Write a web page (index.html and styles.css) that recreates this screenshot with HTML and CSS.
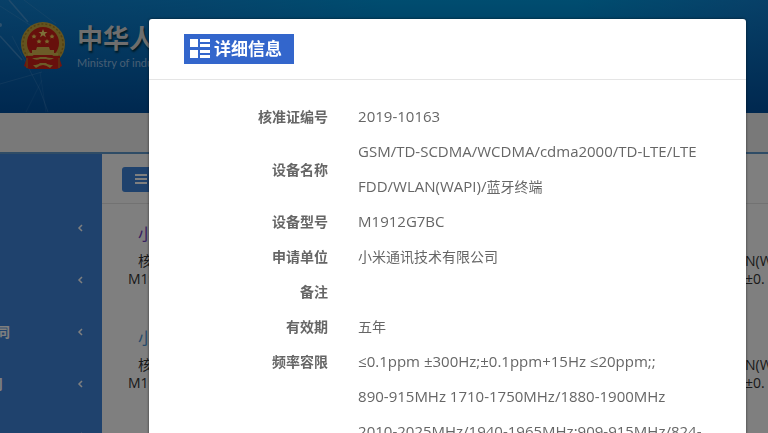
FILE: index.html
```html
<!DOCTYPE html>
<html lang="zh-CN">
<head>
<meta charset="utf-8">
<title>详细信息</title>
<link rel="stylesheet" href="styles.css">
</head>
<body>
<div class="page">
  <header class="banner">
    <svg class="rays" viewBox="0 0 150 113" aria-hidden="true">
      <g fill="none" stroke="#86b9e8">
        <path d="M0 36 22 60M9 0 28 22" stroke-width="1.5" opacity=".4"/>
        <path d="M12 36 40 90 48 112M0 84 42 72M24 0 56 24M0 6 44 34" opacity=".2"/>
        <path d="M26 112 42 80M46 112 40 72" opacity=".12"/>
      </g>
      <circle cx="0" cy="25" r="2" fill="#a9cdef" opacity=".5"/>
    </svg>
    <svg class="emblem" viewBox="0 0 44 48" aria-hidden="true">
      <path d="M6 35h32l3 9-6 3H9l-6-3z" fill="#e02a20"/>
      <circle cx="22" cy="22" r="22" fill="#c9a83f"/>
      <circle cx="22" cy="22" r="20" fill="none" stroke="#a98222" stroke-width="1.5" stroke-dasharray="2 2"/>
      <circle cx="22" cy="21" r="16" fill="#cf2018"/>
      <path d="m22 7 1.200 3h3.300l-2.600 2 1 3.200-2.900-1.900-2.900 1.900 1-3.200-2.600-2h3.300z" fill="#f8df70"/>
      <path d="m13 12 .8 1.500 1.700.2-1.200 1.200.3 1.600-1.600-.7-1.600.7.3-1.600-1.200-1.200 1.700-.2zM31 12l.8 1.500 1.700.2-1.200 1.200.3 1.600-1.600-.7-1.600.7.3-1.600-1.200-1.200 1.700-.2zM18 17l.8 1.500 1.700.2-1.200 1.200.3 1.600-1.600-.7-1.600.7.3-1.600-1.200-1.200 1.700-.2zM26 17l.8 1.500 1.700.2-1.200 1.200.3 1.600-1.600-.7-1.600.7.3-1.600-1.200-1.200 1.700-.2z" fill="#f0cd5a"/>
      <path d="M16 25h12l1 3h4v4H11v-4h4zM7 31h30v2H7z" fill="#d8b850"/>
      <path d="M5 34h34v12l-4 1H9l-4-1z" fill="#cf2018"/>
      <path d="M11 36q6 0 8-1h6q2 1 8 1-4 3-8 1h-6q-4 2-8-1zM12 43q5 0 7-2h6q2 2 7 2l-3 3q-4-3-7-3t-7 3z" fill="#d8b850"/>
      <path d="M6 36v10M38 36v10" stroke="#b58f28"/>
    </svg>
    <div class="brand">
      <div class="brand-name">中华人民</div>
      <div class="brand-sub">Ministry of industry</div>
    </div>
  </header>
  <div class="subnav"></div>
  <div class="columns">
    <nav class="sidebar">
      <a href="#" class="side-item"><svg class="chevron" viewBox="0 0 6 8"><path d="M5 1 2 4l3 3"/></svg></a>
      <a href="#" class="side-item"><svg class="chevron" viewBox="0 0 6 8"><path d="M5 1 2 4l3 3"/></svg></a>
      <a href="#" class="side-item"><span class="side-label">同</span><svg class="chevron" viewBox="0 0 6 8"><path d="M5 1 2 4l3 3"/></svg></a>
      <a href="#" class="side-item"><span class="side-label side-label-short">司</span><svg class="chevron" viewBox="0 0 6 8"><path d="M5 1 2 4l3 3"/></svg></a>
      <a href="#" class="side-item"><svg class="chevron" viewBox="0 0 6 8"><path d="M5 1 2 4l3 3"/></svg></a>
    </nav>
    <main class="results">
      <div class="toolbar">
        <button class="menu-button" type="button" aria-label="菜单">
          <svg class="bars" viewBox="0 0 12 11"><path d="M0 1h12M0 5h12M0 9h12"/></svg>
        </button>
      </div>
      <article class="result">
        <a href="#" class="result-title visited">小米</a>
        <div class="result-line first"><span>核准</span><span class="tail">N(W</span></div>
        <div class="result-line"><span>M1912</span><span class="tail">±0.</span></div>
      </article>
      <article class="result">
        <a href="#" class="result-title">小米</a>
        <div class="result-line first"><span>核准</span><span class="tail">N(W</span></div>
        <div class="result-line"><span>M1912</span><span class="tail">±0.</span></div>
      </article>
    </main>
  </div>
</div>
<div class="overlay">
  <section class="dialog" role="dialog" aria-labelledby="dialog-title">
    <div class="dialog-head">
      <h1 class="dialog-title" id="dialog-title">
        <svg class="list-icon" viewBox="0 0 20 20" aria-hidden="true"><path d="M0 0h8v8H0zM10 0h10v3H10zM10 5h10v3H10zM0 11h8v8H0zM10 11h10v3H10zM10 16h10v3H10z"/></svg>
        <span>详细信息</span>
      </h1>
    </div>
    <table class="details">
      <tr><th scope="row">核准证编号</th><td>2019-10163</td></tr>
      <tr><th scope="row">设备名称</th><td>GSM/TD-SCDMA/WCDMA/cdma2000/TD-LTE/LTE<br>FDD/WLAN(WAPI)/<span class="han">蓝牙终端</span></td></tr>
      <tr><th scope="row">设备型号</th><td>M1912G7BC</td></tr>
      <tr><th scope="row">申请单位</th><td><span class="han">小米通讯技术有限公司</span></td></tr>
      <tr><th scope="row">备注</th><td></td></tr>
      <tr><th scope="row">有效期</th><td><span class="han">五年</span></td></tr>
      <tr><th scope="row">频率容限</th><td>≤0.1ppm ±300Hz;±0.1ppm+15Hz ≤20ppm;;</td></tr>
      <tr><th></th><td>890-915MHz 1710-1750MHz/1880-1900MHz<br>2010-2025MHz/1940-1965MHz;909-915MHz/824-</td></tr>
    </table>
  </section>
</div>
</body>
</html>
```
FILE: styles.css
```css
* { box-sizing: border-box; }
body {
  margin: 0;
  height: 100vh;
  overflow: hidden;
  font: 14px/18px "Open Sans", "Noto Sans CJK SC", sans-serif;
  color: #333;
}
a { text-decoration: none; }
.page {
  height: 100vh;
  overflow: hidden;
  display: flex;
  flex-direction: column;
  background: #fff;
}
.banner {
  position: relative;
  flex: none;
  height: 113px;
  padding: 22px 0 0 21px;
  display: flex;
  gap: 12px;
  background:
    linear-gradient(to bottom, rgba(0, 75, 160, 0) 0%, #00509f 100%),
    linear-gradient(to right, #1080d0 0%, #0b8ad8 25%, #009ae0 50%, #009ae0 75%, #1080d0 100%);
}
.rays { position: absolute; left: 0; top: 0; width: 150px; height: 113px; }
.emblem { position: relative; width: 44px; height: 48px; }
.brand { position: relative; white-space: nowrap; color: #fff; }
.brand-name { font-size: 26px; line-height: 32px; font-weight: 700; color: #ddd; text-shadow: 1px 2px 2px #034; }
.brand-sub { font: 11px/18px Lato, sans-serif; color: #8ebce6; }
.subnav { flex: none; height: 41px; background: #f2f2f2; border-bottom: 2px solid #5f98cc; }
.columns { flex: 1; min-height: 0; display: flex; }
.sidebar { width: 102px; flex: none; padding-top: 48px; background: #3e84da; }
.side-item {
  height: 52px;
  padding-right: 19px;
  display: flex;
  align-items: center;
  color: #fff;
}
.side-label { width: 10px; overflow: hidden; display: flex; justify-content: flex-end; font-weight: 700; }
.side-label-short { width: 3px; }
.chevron { width: 6px; height: 8px; margin-left: auto; fill: none; stroke: #fff; stroke-width: 1.5; }
.results { flex: 1; min-width: 0; overflow: hidden; }
.toolbar { height: 50px; padding: 13px 20px; border-bottom: 1px solid #e5e5e5; }
.menu-button {
  width: 60px;
  height: 25px;
  padding: 0 13px;
  display: flex;
  align-items: center;
  border: 0;
  border-radius: 3px;
  background: #3e84da;
}
.bars { width: 12px; height: 11px; stroke: #fff; stroke-width: 2; }
.result { height: 104px; padding: 19px 0 0 26px; }
.result-title { display: block; padding-left: 10px; font-size: 16px; line-height: 22px; color: #4a96d8; }
.result-title.visited { color: #7040c0; }
.result-line { display: flex; justify-content: space-between; color: #333; }
.result-line.first { margin-top: 7px; }
.result-line.first span:first-child { padding-left: 10px; }
.tail { width: 23px; overflow: hidden; white-space: nowrap; }
.overlay {
  position: fixed;
  inset: 0;
  padding: 19px 22px 0 149px;
  overflow: hidden;
  background: rgba(0, 0, 0, .5);
}
.dialog {
  min-height: 100vh;
  background: #fff;
  border-radius: 3px;
  box-shadow: 0 0 3px rgba(0, 0, 0, .6);
}
.dialog-head { padding: 15px 35px; border-bottom: 1px solid #e5e5e5; }
.dialog-title {
  width: 110px;
  height: 30px;
  margin: 0;
  padding-left: 6px;
  display: flex;
  align-items: center;
  gap: 4px;
  font-size: 17px;
  line-height: 30px;
  color: #fff;
  background: #3366cc;
}
.list-icon { width: 20px; height: 20px; fill: #fff; }
.details {
  width: 100%;
  margin-top: 19px;
  border-collapse: collapse;
  font-size: 14px;
  line-height: 35px;
  color: #666;
}
.details th, .details td { height: 35px; padding: 0; }
.details th { width: 30%; text-align: right; font-weight: 700; }
.details td { padding-left: 30px; white-space: nowrap; font-size: 15px; }
.details .han { font-size: 14px; }
```
